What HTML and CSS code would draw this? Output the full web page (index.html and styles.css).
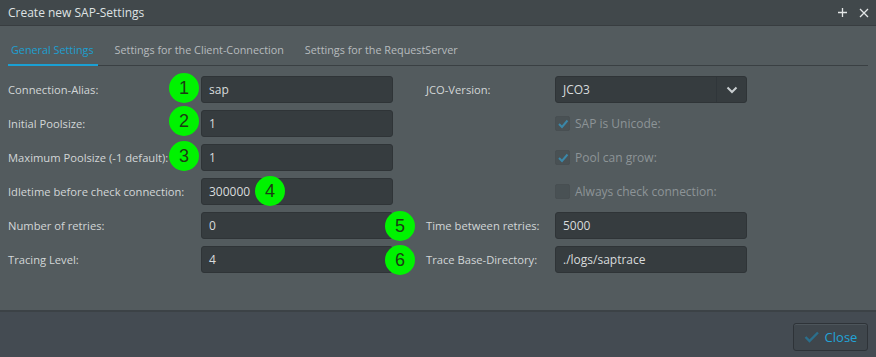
FILE: index.html
```html
<!DOCTYPE html>
<html lang="en">
<head>
  <meta charset="UTF-8">
  <title>Create new SAP-Settings</title>
  <link rel="stylesheet" href="styles.css">
</head>
<body>
  <div class="dialog">
    <div class="titlebar">
      <span class="title">Create new SAP-Settings</span>
      <span class="title-tools">
        <svg width="11" height="11" viewBox="0 0 11 11"><path d="M5.5 1 V10 M1 5.5 H10" stroke="#e3e6e7" stroke-width="1.3"/></svg>
        <svg width="10" height="10" viewBox="0 0 10 10"><path d="M1 1 L9 9 M9 1 L1 9" stroke="#e3e6e7" stroke-width="1.3"/></svg>
      </span>
    </div>

    <div class="content">
      <div class="tabs">
        <span class="tab active">General Settings</span>
        <span class="tab">Settings for the Client-Connection</span>
        <span class="tab">Settings for the RequestServer</span>
      </div>

      <div class="form">
        <label class="lbl">Connection-Alias:</label>
        <div class="field">sap</div>
        <label class="lbl lbl-right">JCO-Version:</label>
        <div class="field select">JCO3<span class="select-btn"><svg width="12" height="8" viewBox="0 0 12 8"><path d="M1.5 1.5 L6 6 L10.5 1.5" fill="none" stroke="#c9ced0" stroke-width="2"/></svg></span></div>

        <label class="lbl">Initial Poolsize:</label>
        <div class="field">1</div>
        <span class="lbl-right"></span>
        <div class="check on"><span class="box"><svg width="12" height="12" viewBox="0 0 12 12"><path d="M2 6 L5 9 L10.5 2.5" fill="none" stroke="#3b87a8" stroke-width="2"/></svg></span>SAP is Unicode:</div>

        <label class="lbl">Maximum Poolsize (-1 default):</label>
        <div class="field">1</div>
        <span class="lbl-right"></span>
        <div class="check on"><span class="box"><svg width="12" height="12" viewBox="0 0 12 12"><path d="M2 6 L5 9 L10.5 2.5" fill="none" stroke="#3b87a8" stroke-width="2"/></svg></span>Pool can grow:</div>

        <label class="lbl">Idletime before check connection:</label>
        <div class="field">300000</div>
        <span class="lbl-right"></span>
        <div class="check"><span class="box"></span>Always check connection:</div>

        <label class="lbl">Number of retries:</label>
        <div class="field">0</div>
        <label class="lbl lbl-right">Time between retries:</label>
        <div class="field">5000</div>

        <label class="lbl">Tracing Level:</label>
        <div class="field">4</div>
        <label class="lbl lbl-right">Trace Base-Directory:</label>
        <div class="field">./logs/saptrace</div>

        <!-- annotation markers -->
        <span class="marker" style="left: 169px; top: -3px;">1</span>
        <span class="marker" style="left: 169px; top: 30px;">2</span>
        <span class="marker" style="left: 169px; top: 65px;">3</span>
        <span class="marker" style="left: 255px; top: 100px;">4</span>
        <span class="marker" style="left: 385px; top: 135px;">5</span>
        <span class="marker" style="left: 385px; top: 169px;">6</span>
      </div>
    </div>

    <div class="footer">
      <button class="btn-close"><svg width="16" height="12" viewBox="0 0 16 12"><path d="M1.5 6 L5.5 10 L14 1.5" fill="none" stroke="#2b6f8c" stroke-width="2.4"/></svg>Close</button>
    </div>
  </div>
</body>
</html>
```

FILE: styles.css
```css
body {
  margin: 0;
  font-family: "Open Sans", "Noto Sans", Arial, sans-serif;
  background-color: #444b52;
}
.dialog {
  width: 876px;
  height: 357px;
  display: flex;
  flex-direction: column;
}
.titlebar {
  height: 26px;
  background-color: #41484b;
  border-bottom: 1px solid #383d40;
  display: flex;
  align-items: center;
  justify-content: space-between;
  padding: 0 8px;
  box-sizing: border-box;
}
.title {
  color: #dfe2e3;
  font-size: 12px;
}
.title-tools {
  display: flex;
  align-items: center;
  gap: 11px;
  margin-right: -1px;
}
.content {
  height: 284px;
  background-color: #535b5e;
  padding-top: 9px;
  box-sizing: border-box;
}
.tabs {
  display: flex;
  gap: 14px;
  margin: 0 8px;
  border-bottom: 1px solid #3a4043;
}
.tab {
  font-size: 10.8px;
  line-height: 15px;
  color: #b7bcbe;
  padding: 7px 4px 7px 3px;
  border-bottom: 2px solid transparent;
  margin-bottom: -1px;
}
.tab.active {
  color: #1d9fd0;
  border-bottom-color: #1aa0d4;
}
.form {
  position: relative;
  display: grid;
  grid-template-columns: 193px 192px 162px 192px;
  row-gap: 7px;
  grid-auto-rows: 27px;
  padding-left: 8px;
  margin-top: 10px;
}
.lbl {
  font-size: 11.2px;
  color: #d2d6d7;
  display: flex;
  align-items: center;
  white-space: nowrap;
}
.lbl-right {
  padding-left: 33px;
}
.field {
  background-color: #363c3f;
  border: 1px solid #2f3437;
  border-radius: 3px;
  color: #d8dbdc;
  font-size: 12px;
  padding-left: 7px;
  display: flex;
  align-items: center;
  box-sizing: border-box;
}
.select-btn {
  margin-left: auto;
  width: 29px;
  height: 100%;
  border-left: 1px solid #30363a;
  display: flex;
  align-items: center;
  justify-content: center;
}
.check {
  display: flex;
  align-items: center;
  font-size: 12px;
  color: #8d9497;
}
.box {
  width: 13px;
  height: 13px;
  border: 1px solid #484f52;
  border-radius: 2px;
  background-color: #495154;
  margin-right: 5px;
  display: flex;
  align-items: center;
  justify-content: center;
}
.marker {
  position: absolute;
  width: 30px;
  height: 30px;
  border-radius: 50%;
  background-color: #00f300;
  color: #1b3b13;
  font-size: 18px;
  font-family: "Liberation Sans", Arial, sans-serif;
  display: flex;
  align-items: center;
  justify-content: center;
}
.footer {
  flex: 1;
  background-color: #444b52;
  border-top: 2px solid #3c4246;
  display: flex;
  justify-content: flex-end;
  align-items: flex-start;
  padding: 11px 8px 0 0;
}
.btn-close {
  width: 75px;
  height: 28px;
  background-color: #3f464c;
  border: 1px solid #2e3338;
  border-radius: 3px;
  box-shadow: inset 0 1px 0 #4d555b;
  color: #22a4d8;
  font-family: "Open Sans", "Noto Sans", Arial, sans-serif;
  font-size: 13px;
  display: flex;
  align-items: center;
  justify-content: center;
  gap: 5px;
  padding: 0;
}
```
